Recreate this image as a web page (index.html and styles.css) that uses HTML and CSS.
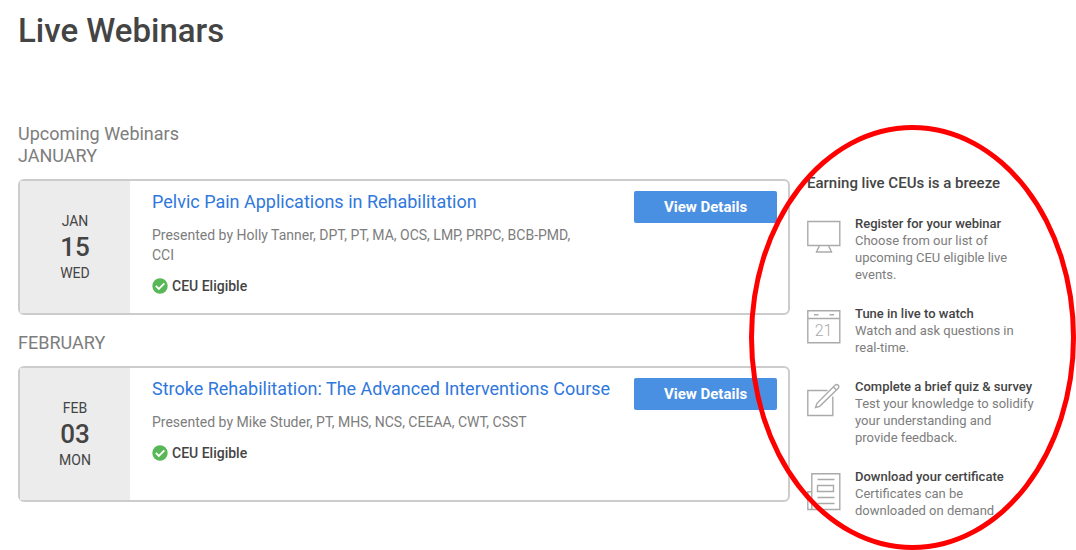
FILE: index.html
```html
<!DOCTYPE html>
<html lang="en">
<head>
  <meta charset="UTF-8">
  <meta name="viewport" content="width=device-width, initial-scale=1.0">
  <title>Live Webinars</title>
  <link rel="stylesheet" href="styles.css">
</head>
<body>
  <h1 class="page-title">Live Webinars</h1>
  <div class="layout">
    <main class="webinars">
      <h2 class="list-title">Upcoming Webinars</h2>

      <section class="month">
        <h3 class="month-name">JANUARY</h3>
        <article class="card">
          <div class="date">
            <span>JAN</span>
            <span class="day">15</span>
            <span>WED</span>
          </div>
          <div class="info">
            <a href="#" class="webinar-link">Pelvic Pain Applications in Rehabilitation</a>
            <p class="presenter">Presented by Holly Tanner, DPT, PT, MA, OCS, LMP, PRPC, BCB-PMD, CCI</p>
            <p class="eligible">
              <svg class="check" viewBox="0 0 15 15"><circle cx="7.5" cy="7.5" r="7.2" fill="#58b757"/><path d="M3.6 7.4 L6.4 10.2 L11.6 5" fill="none" stroke="#fff" stroke-width="1.7"/></svg>
              CEU Eligible
            </p>
          </div>
          <button type="button" class="details-button">View Details</button>
        </article>
      </section>

      <section class="month">
        <h3 class="month-name">FEBRUARY</h3>
        <article class="card">
          <div class="date">
            <span>FEB</span>
            <span class="day">03</span>
            <span>MON</span>
          </div>
          <div class="info">
            <a href="#" class="webinar-link">Stroke Rehabilitation: The Advanced Interventions Course</a>
            <p class="presenter">Presented by Mike Studer, PT, MHS, NCS, CEEAA, CWT, CSST</p>
            <p class="eligible">
              <svg class="check" viewBox="0 0 15 15"><circle cx="7.5" cy="7.5" r="7.2" fill="#58b757"/><path d="M3.6 7.4 L6.4 10.2 L11.6 5" fill="none" stroke="#fff" stroke-width="1.7"/></svg>
              CEU Eligible
            </p>
          </div>
          <button type="button" class="details-button">View Details</button>
        </article>
      </section>
    </main>

    <aside class="steps">
      <h2 class="steps-title">Earning live CEUs is a breeze</h2>
      <ul class="step-list">
        <li class="step">
          <svg class="icon" viewBox="0 0 34 38">
            <path d="M.8 1.5H32.8V25.5H.8Z M12.5 25.5L9.5 32H24.5L21.5 25.5"/>
          </svg>
          <div>
            <h4>Register for your webinar</h4>
            <p>Choose from our list of upcoming CEU eligible live events.</p>
          </div>
        </li>
        <li class="step">
          <svg class="icon" viewBox="0 0 34 38">
            <path d="M.8 .8H32.8V32.8H.8Z M.8 8.5H32.8 M7 4.8H11.5 M22.5 4.8H27"/>
            <text x="16.5" y="26">21</text>
          </svg>
          <div>
            <h4>Tune in live to watch</h4>
            <p>Watch and ask questions in real-time.</p>
          </div>
        </li>
        <li class="step">
          <svg class="icon" viewBox="0 0 34 38">
            <path d="M20.5 7.5H.8V32.5H25.8V13.5"/>
            <path d="M8.5 24.5L10 20.3L28 2.3Q29.7 .8 31.2 2.2Q32.5 3.7 31.2 5.3L12.7 23.3Z M26.3 4L29.5 7.1"/>
          </svg>
          <div>
            <h4>Complete a brief quiz &amp; survey</h4>
            <p>Test your knowledge to solidify your understanding and provide feedback.</p>
          </div>
        </li>
        <li class="step">
          <svg class="icon" viewBox="0 0 34 38">
            <path d="M4.8 36.5V.8H32.8V36.5H.8V18.8H4.8 M10.5 6.5H27.5 M10.5 12.5H26.5V18.5H10.5Z M10.5 24.5H27.5 M10.5 30.5H27.5"/>
          </svg>
          <div>
            <h4>Download your certificate</h4>
            <p>Certificates can be downloaded on demand</p>
          </div>
        </li>
      </ul>
      <div class="highlight"></div>
    </aside>
  </div>
</body>
</html>
```

FILE: styles.css
```css
* {
  box-sizing: border-box;
}

body {
  margin: 0;
  padding: 11px 36px 31px 18px;
  background: white;
  color: #7d7d7d;
  font-family: Roboto, "Liberation Sans", sans-serif;
}

h1, h2, h3, h4, p, ul {
  margin: 0;
  padding: 0;
  font-weight: 400;
}

.page-title {
  margin-bottom: 72px;
  font-size: 33px;
  line-height: 40px;
  font-weight: 500;
  color: #444;
}

.layout {
  display: grid;
  grid-template-columns: minmax(0, 1fr) 233px;
  gap: 17px;
}

.list-title,
.month-name {
  font-size: 18px;
  line-height: 22px;
}

.month-name {
  margin-bottom: 12px;
}

.month + .month {
  margin-top: 17px;
}

.card {
  display: flex;
  align-items: flex-start;
  min-height: 136px;
  padding-right: 11px;
  border: 2px solid #ccc;
  border-radius: 6px;
}

.date {
  display: flex;
  flex-direction: column;
  justify-content: center;
  align-self: stretch;
  flex: 0 0 110px;
  background: #ececec;
  color: #444;
  font-size: 14px;
  line-height: 20px;
  text-align: center;
}

.day {
  font-size: 26px;
  line-height: 32px;
  font-weight: 500;
}

.info {
  flex: 1;
  padding: 10px 20px 10px 22px;
}

.webinar-link {
  display: block;
  color: #2f78dc;
  font-size: 18px;
  line-height: 22px;
  text-decoration: none;
}

.webinar-link:hover {
  text-decoration: underline;
}

.presenter {
  margin: 12px 0 11px;
  padding-right: 24px;
  font-size: 14px;
  line-height: 20px;
}

.eligible {
  display: flex;
  align-items: center;
  gap: 4px;
  color: #444;
  font-size: 14px;
  line-height: 20px;
  font-weight: 500;
}

.check {
  width: 16px;
  height: 16px;
}

.details-button {
  flex: 0 0 143px;
  height: 32px;
  margin-top: 10px;
  padding: 0;
  border: none;
  border-radius: 2px;
  background: #4a90e2;
  color: white;
  font-family: inherit;
  font-size: 15px;
  font-weight: 700;
  cursor: pointer;
}

.details-button:hover {
  background: #3a7fd0;
}

.steps {
  position: relative;
  padding-top: 50px;
}

.steps-title {
  margin-bottom: 22px;
  color: #444;
  font-size: 15px;
  line-height: 20px;
  font-weight: 500;
}

.step-list {
  display: flex;
  flex-direction: column;
  gap: 22px;
  list-style: none;
}

.step {
  display: flex;
  align-items: flex-start;
  gap: 14px;
  padding-right: 4px;
  font-size: 13px;
  line-height: 17px;
}

.step h4 {
  color: #444;
  font-weight: 500;
}

.icon {
  flex: none;
  width: 34px;
  height: 38px;
  margin-top: 5px;
  fill: none;
  stroke: #aaa;
  stroke-width: 1.4;
}

.icon text {
  fill: #aaa;
  stroke: none;
  font-size: 16px;
  font-weight: 300;
  text-anchor: middle;
}

/* red ring drawn over the steps */
.highlight {
  position: absolute;
  top: 2px;
  right: -36px;
  bottom: -31px;
  left: -58px;
  border: 5px solid red;
  border-radius: 50%;
  pointer-events: none;
}
```
